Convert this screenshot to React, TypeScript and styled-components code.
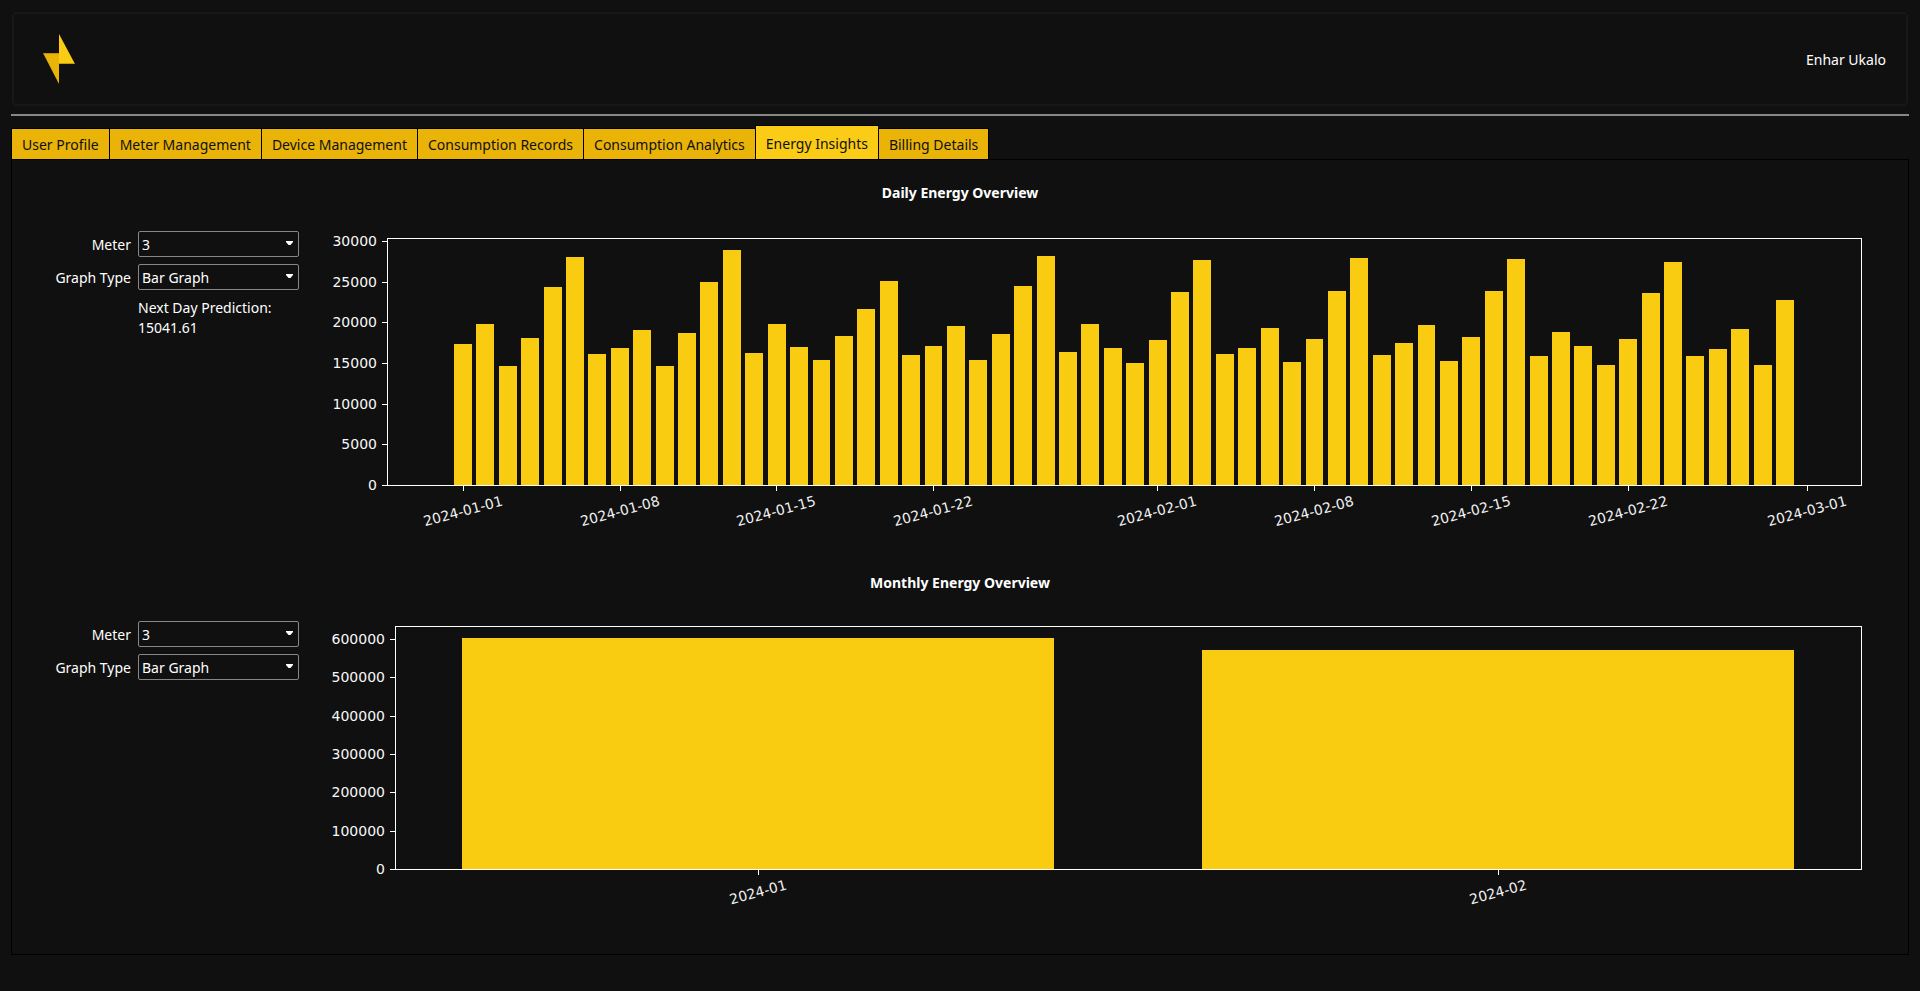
import React, { useId, useLayoutEffect, useRef, useState } from "react";
import styled, { createGlobalStyle } from "styled-components";

const GlobalStyle = createGlobalStyle`
  *, *::before, *::after { box-sizing: border-box; }
  body {
    margin: 0;
    background: #101010;
    color: #ffffff;
    font: 14px/20px "Noto Sans", "Open Sans", sans-serif;
  }
`;

const Page = styled.div`
  display: flex;
  flex-direction: column;
  padding: 12px 11px 36px;
`;

const Header = styled.header`
  display: flex;
  align-items: center;
  justify-content: space-between;
  height: 94px;
  margin: 0 1px 8px;
  padding: 0 20px 0 29px;
  border: 2px solid #181818;
  border-radius: 5px;
`;

const UserName = styled.span`
  padding-top: 2px;
`;

const Divider = styled.hr`
  width: 100%;
  height: 2px;
  margin: 0 0 9px;
  border: 0;
  background: #878787;
`;

const TabBar = styled.div`
  display: flex;
  align-items: flex-end;
  height: 34px;
`;

const Tab = styled.button<{ $active: boolean }>`
  height: ${(p) => (p.$active ? 35 : 32)}px;
  margin: 0 0 -1px;
  padding: 2px 10px 0;
  border: solid #000000;
  border-width: 1px 0 ${(p) => (p.$active ? 0 : 1)}px 1px;
  background: ${(p) => (p.$active ? "#facc15" : "#eab308")};
  color: #101010;
  font: inherit;
  white-space: nowrap;
  &:last-child { border-right-width: 1px; }
`;

const Panel = styled.main`
  padding: 7px 0;
  border: 1px solid #000000;
`;

const Section = styled.section`
  padding: 16px 46px 0 0;
`;

const Title = styled.h2`
  margin: 0 0 28px 46px;
  font-size: 14px;
  line-height: 20px;
  font-weight: 700;
  text-align: center;
`;

const SectionBody = styled.div`
  display: flex;
  align-items: flex-start;
  gap: 24px;
`;

const Controls = styled.form`
  display: grid;
  grid-template-columns: 119px 161px;
  gap: 7px;
  align-items: center;
`;

const FieldLabel = styled.label`
  padding-top: 2px;
  text-align: right;
`;

const SelectBox = styled.div`
  display: grid;
  grid-template-columns: 1fr 17px;
  align-items: center;
  height: 26px;
  border: 1px solid #878787;
  border-radius: 2px;
`;

const Select = styled.select`
  grid-area: 1 / 1 / 2 / 3;
  height: 24px;
  padding: 2px 20px 0 3px;
  border: 0;
  appearance: none;
  background: transparent;
  color: inherit;
  font: inherit;
`;

const Arrow = styled.svg`
  grid-area: 1 / 2;
  width: 7px;
  height: 4px;
  margin: 0 0 2px 5px;
  pointer-events: none;
`;

const Prediction = styled.output`
  grid-column: 2;
  padding-top: 1px;
`;

const ChartArea = styled.div`
  flex: 1;
  min-width: 0;
  height: 326px;
`;

const ChartSvg = styled.svg`
  display: block;
  width: 100%;
  height: 326px;
  font: 14px "DejaVu Sans", sans-serif;
`;

type Tick = { at: number; label: string };

type ChartProps = {
  label: string;
  values: number[];
  plot: { left: number; top: number; bottom: number };
  yStep: number;
  xTicks: Tick[];
  labelDrop: number;
};

function BarChart({ label, values, plot, yStep, xTicks, labelDrop }: ChartProps) {
  const ref = useRef<HTMLDivElement>(null);
  const [width, setWidth] = useState(0);

  useLayoutEffect(() => {
    const node = ref.current;
    if (!node) return;
    const measure = () => setWidth(node.clientWidth);
    measure();
    const observer = new ResizeObserver(measure);
    observer.observe(node);
    return () => observer.disconnect();
  }, []);

  const right = Math.max(width - 1, plot.left + 10);
  const plotWidth = right - plot.left;
  const plotHeight = plot.bottom - plot.top;

  // Bars fill 0.8 of a category; 5% margins surround the data on each side.
  const span = values.length - 0.2;
  const unit = plotWidth / (span * 1.1);
  const xAt = (i: number) => plot.left + span * 0.05 * unit + (i + 0.4) * unit;
  const maxY = Math.max(...values) * 1.05;
  const yAt = (v: number) => plot.bottom - (v / maxY) * plotHeight;
  const yTicks = Array.from({ length: Math.floor(maxY / yStep) + 1 }, (_, i) => i * yStep);

  return (
    <ChartArea ref={ref}>
      <ChartSvg role="img" aria-label={label}>
        {values.map((v, i) => {
          const x0 = Math.round(xAt(i - 0.4));
          const x1 = Math.round(xAt(i + 0.4));
          const y = Math.round(yAt(v));
          return <rect key={i} x={x0} y={y} width={x1 - x0} height={plot.bottom - y} fill="#facc11" />;
        })}
        <rect
          x={plot.left + 0.5}
          y={plot.top + 0.5}
          width={plotWidth}
          height={plotHeight}
          fill="none"
          stroke="#ffffff"
        />
        {yTicks.map((v) => {
          const y = Math.round(yAt(v));
          return (
            <g key={v}>
              <rect x={plot.left - 5} y={y} width={5} height={1} fill="#ffffff" />
              <text x={plot.left - 10} y={y + 5} textAnchor="end" fill="#f8f8f8">
                {v}
              </text>
            </g>
          );
        })}
        {xTicks.map((t) => {
          const x = Math.round(xAt(t.at) - 0.25);
          return (
            <g key={t.label}>
              <rect x={x} y={plot.bottom + 1} width={1} height={5} fill="#ffffff" />
              <text
                transform={`translate(${x} ${plot.bottom + labelDrop}) rotate(-15)`}
                y={5}
                textAnchor="middle"
                fill="#f0f0f0"
              >
                {t.label}
              </text>
            </g>
          );
        })}
      </ChartSvg>
    </ChartArea>
  );
}

function SelectField({ label, value }: { label: string; value: string }) {
  const id = useId();
  return (
    <>
      <FieldLabel htmlFor={id}>{label}</FieldLabel>
      <SelectBox>
        <Select id={id} defaultValue={value}>
          <option>{value}</option>
        </Select>
        <Arrow viewBox="0 0 7 4" aria-hidden="true">
          <path d="M0 0H7V1L4.5 4H2.5L0 1Z" fill="#ffffff" />
        </Arrow>
      </SelectBox>
    </>
  );
}

const tabs = [
  "User Profile",
  "Meter Management",
  "Device Management",
  "Consumption Records",
  "Consumption Analytics",
  "Energy Insights",
  "Billing Details",
];

const daily = [
  17380, 19840, 14670, 18110, 24380, 28070, 16150, 16890, 19100, 14670, 18730, 25000,
  28930, 16270, 19840, 17010, 15410, 18360, 21680, 25120, 16020, 17130, 19590, 15410,
  18610, 24510, 28200, 16390, 19840, 16890, 15040, 17870, 23770, 27710, 16150, 16890,
  19340, 15160, 17990, 23890, 27950, 16020, 17500, 19710, 15290, 18240, 23890, 27830,
  15900, 18850, 17130, 14790, 17990, 23650, 27460, 15900, 16760, 19220, 14790, 22790,
];

const dailyTicks: Tick[] = [
  { at: 0, label: "2024-01-01" },
  { at: 7, label: "2024-01-08" },
  { at: 14, label: "2024-01-15" },
  { at: 21, label: "2024-01-22" },
  { at: 31, label: "2024-02-01" },
  { at: 38, label: "2024-02-08" },
  { at: 45, label: "2024-02-15" },
  { at: 52, label: "2024-02-22" },
  { at: 60, label: "2024-03-01" },
];

const monthly = [603500, 572100];

const monthlyTicks: Tick[] = [
  { at: 0, label: "2024-01" },
  { at: 1, label: "2024-02" },
];

export default function App() {
  const [active, setActive] = useState("Energy Insights");
  return (
    <>
      <GlobalStyle />
      <Page>
        <Header>
          <svg width="32" height="50" viewBox="0 0 32 50" role="img" aria-label="Energy">
            <path d="M0 19H16V50Z" fill="#eab308" />
            <path d="M16 0L32 30H16Z" fill="#facc15" />
            <path d="M0 19H16V19.6H0.4ZM16 30H32L31.6 29.4H16Z" fill="#8a6b0c" />
          </svg>
          <UserName>Enhar Ukalo</UserName>
        </Header>
        <Divider />
        <TabBar role="tablist">
          {tabs.map((t) => (
            <Tab
              key={t}
              type="button"
              role="tab"
              aria-selected={t === active}
              $active={t === active}
              onClick={() => setActive(t)}
            >
              {t}
            </Tab>
          ))}
        </TabBar>
        <Panel>
          <Section>
            <Title>Daily Energy Overview</Title>
            <SectionBody>
              <Controls>
                <SelectField label="Meter" value="3" />
                <SelectField label="Graph Type" value="Bar Graph" />
                <Prediction>Next Day Prediction: 15041.61</Prediction>
              </Controls>
              <BarChart
                label="Daily Energy Overview"
                values={daily}
                plot={{ left: 64, top: 7, bottom: 254 }}
                yStep={5000}
                xTicks={dailyTicks}
                labelDrop={26}
              />
            </SectionBody>
          </Section>
          <Section>
            <Title>Monthly Energy Overview</Title>
            <SectionBody>
              <Controls>
                <SelectField label="Meter" value="3" />
                <SelectField label="Graph Type" value="Bar Graph" />
              </Controls>
              <BarChart
                label="Monthly Energy Overview"
                values={monthly}
                plot={{ left: 72, top: 5, bottom: 248 }}
                yStep={100000}
                xTicks={monthlyTicks}
                labelDrop={23}
              />
            </SectionBody>
          </Section>
        </Panel>
      </Page>
    </>
  );
}
